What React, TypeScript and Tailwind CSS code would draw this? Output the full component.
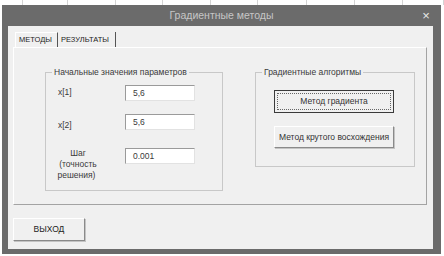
import React from "react";

const cells = [23, 45, 48, 47, 48, 47, 49, 48, 48, 41];

const Field = ({ value }: { value: string }) => (
    <div className="w-[70px] h-[16px] bg-white border border-t-[#9a9a9a] border-l-[#9a9a9a] border-r-[#e2e2e2] border-b-[#e2e2e2] pl-[7px] text-[8.5px] leading-[14px] text-[#3a3a3a]">
        {value}
    </div>
);

const App = () => {
    return (
        <div className="w-[444px] h-[256px] bg-white font-['Liberation_Sans',Arial,sans-serif] overflow-hidden">
            {/* sheet grid peeking above the dialog */}
            <div className="flex h-[5px]">
                {cells.map((w, i) => (
                    <div key={i} style={{ width: w }} className="h-full border-r border-[#d4d4d4]" />
                ))}
            </div>

            <div className="ml-[2px] w-[439px] h-[249px] bg-[#6b6b6b] flex flex-col">
                <div className="h-[21px] flex items-center">
                    <div className="w-[30px]" />
                    <div className="flex-1 text-center text-[10.5px] text-[#c6c6c6] pt-[1px]">Градиентные методы</div>
                    <div className="w-[30px] text-[13px] leading-none text-[#e8e8e8] text-center">×</div>
                </div>

                <div className="ml-[6px] mr-[8px] mb-[5px] flex-1 bg-[#f0f0f0] pl-[5px] pr-[6px] pt-[6px] flex flex-col">
                    <div className="flex h-[15px] items-stretch text-[7.5px] text-[#222] pl-[2px]">
                        <div className="w-[43px] border-t border-l border-white border-r border-r-[#555] flex items-center pl-[3px]">МЕТОДЫ</div>
                        <div className="w-[58px] border-r border-[#555] flex items-center pl-[3px]">РЕЗУЛЬТАТЫ</div>
                    </div>

                    <div className="h-[158px] border border-t-white border-l-white border-r-[#a3a3a3] border-b-[#a3a3a3] flex items-start pl-[31px] pt-[19px]">
                        <fieldset className="w-[178px] h-[124px] border border-[#c8c8c8] pl-[12px] pr-0">
                            <legend className="text-[8.5px] leading-[11px] text-[#3a3a3a] px-[2px] -ml-[6px]">Начальные значения параметров</legend>
                            <div className="flex items-center mt-[7px]">
                                <div className="w-[67px] text-[8.5px] text-[#3a3a3a] -mt-[2px]">x[1]</div>
                                <Field value="5,6" />
                            </div>
                            <div className="flex items-center mt-[12px]">
                                <div className="w-[67px] text-[8.5px] text-[#3a3a3a] pt-[6px]">x[2]</div>
                                <Field value="5,6" />
                            </div>
                            <div className="flex items-start mt-[16px]">
                                <div className="w-[67px] text-[8.5px] leading-[11px] text-[#3a3a3a]">
                                    <div className="w-[40px] text-center">
                                        Шаг<br />(точность<br />
                                        <span className="-ml-[3px]">решения)</span>
                                    </div>
                                </div>
                                <Field value="0.001" />
                            </div>
                        </fieldset>

                        <fieldset className="ml-[32px] w-[160px] h-[100px] border border-[#c8c8c8] pl-[18px]">
                            <legend className="text-[8.5px] leading-[11px] text-[#3a3a3a] px-[2px] -ml-[12px]">Градиентные алгоритмы</legend>
                            <button className="mt-[12px] w-[120px] h-[23px] bg-[#f0f0f0] border border-[#3a3a3a] p-[2px] text-[8.5px] text-[#333]">
                                <div className="h-full border border-dotted border-[#666] flex items-center justify-center">Метод градиента</div>
                            </button>
                            <button className="mt-[13px] w-[120px] h-[22px] bg-[#f0f0f0] border border-t-white border-l-white border-r-[#8a8a8a] border-b-[#8a8a8a] shadow-[1px_1px_0_#c4c4c4] text-[8.5px] text-[#333] flex items-center justify-center">
                                Метод крутого восхождения
                            </button>
                        </fieldset>
                    </div>

                    <button className="mt-[13px] w-[72px] h-[23px] bg-[#f0f0f0] border border-t-white border-l-white border-r-[#8a8a8a] border-b-[#8a8a8a] shadow-[1px_1px_0_#c4c4c4] text-[8.5px] text-[#222] flex items-center justify-center">
                        ВЫХОД
                    </button>
                </div>
            </div>
        </div>
    );
};

export default App;
